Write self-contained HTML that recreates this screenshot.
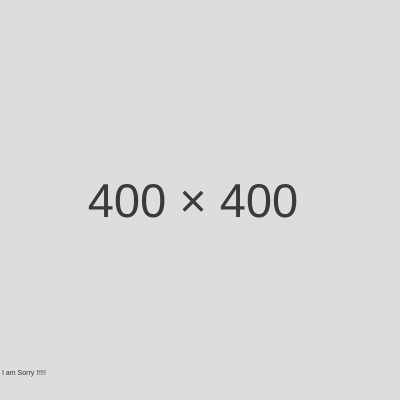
<!DOCTYPE html>
<html><head><style>
html,body{margin:0;padding:0;}
body{width:400px;height:400px;background:#dddddd;position:relative;overflow:hidden;font-family:"Liberation Sans",sans-serif;}
.big{position:absolute;left:0;width:400px;text-align:center;top:174px;font-size:47px;line-height:54px;color:#3a3a3a;font-weight:300;letter-spacing:0;margin-left:-7px;}
.small{position:absolute;left:2px;top:369px;font-size:7px;line-height:9px;color:#333;}
</style></head><body>
<div class="big">400 × 400</div>
<div class="small">I am Sorry !!!!!</div>
</body></html>
